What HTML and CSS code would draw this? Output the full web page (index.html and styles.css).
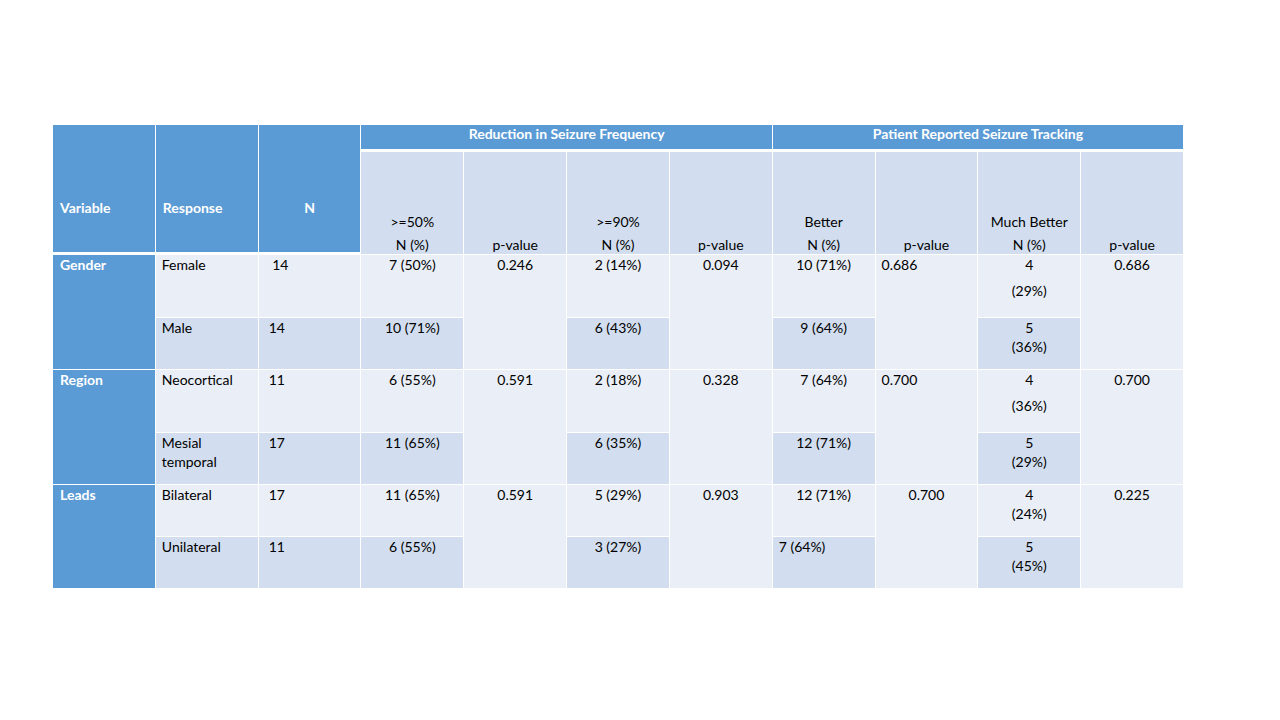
FILE: index.html
```html
<!DOCTYPE html>
<html lang="en">
<head>
<meta charset="utf-8">
<title>Seizure outcomes table</title>
<link rel="stylesheet" href="styles.css">
</head>
<body>
<div class="table">
  <div class="hd var span2r">Variable</div>
  <div class="hd var span2r">Response</div>
  <div class="hd var span2r center">N</div>
  <div class="hd group span4c">Reduction in Seizure Frequency</div>
  <div class="hd group span4c">Patient Reported Seizure Tracking</div>

  <div class="sub"><span class="l1">&gt;=50%</span><span>N (%)</span></div>
  <div class="sub"><span>p-value</span></div>
  <div class="sub"><span class="l1">&gt;=90%</span><span>N (%)</span></div>
  <div class="sub"><span>p-value</span></div>
  <div class="sub"><span class="l1">Better</span><span>N (%)</span></div>
  <div class="sub"><span>p-value</span></div>
  <div class="sub"><span class="l1">Much Better</span><span>N (%)</span></div>
  <div class="sub"><span>p-value</span></div>

  <!-- Gender -->
  <div class="rh span2r">Gender</div>
  <div class="d a left">Female</div>
  <div class="d a left n">&nbsp;14</div>
  <div class="d a">7 (50%)</div>
  <div class="d a span2r">0.246</div>
  <div class="d a">2 (14%)</div>
  <div class="d a span2r">0.094</div>
  <div class="d a">10 (71%)</div>
  <div class="d a span2r left">0.686</div>
  <div class="d a"><span class="ln">4</span><span class="ln wide">(29%)</span></div>
  <div class="d a span2r">0.686</div>

  <div class="d b left">Male</div>
  <div class="d b left n">14</div>
  <div class="d b">10 (71%)</div>
  <div class="d b">6 (43%)</div>
  <div class="d b">9 (64%)</div>
  <div class="d b"><span class="ln">5</span><span class="ln">(36%)</span></div>

  <!-- Region -->
  <div class="rh span2r">Region</div>
  <div class="d a left">Neocortical</div>
  <div class="d a left n">11</div>
  <div class="d a">6 (55%)</div>
  <div class="d a span2r">0.591</div>
  <div class="d a">2 (18%)</div>
  <div class="d a span2r">0.328</div>
  <div class="d a">7 (64%)</div>
  <div class="d a span2r left">0.700</div>
  <div class="d a"><span class="ln">4</span><span class="ln wide">(36%)</span></div>
  <div class="d a span2r">0.700</div>

  <div class="d b left"><span class="ln">Mesial</span><span class="ln">temporal</span></div>
  <div class="d b left n">17</div>
  <div class="d b">11 (65%)</div>
  <div class="d b">6 (35%)</div>
  <div class="d b">12 (71%)</div>
  <div class="d b"><span class="ln">5</span><span class="ln">(29%)</span></div>

  <!-- Leads -->
  <div class="rh span2r">Leads</div>
  <div class="d a left">Bilateral</div>
  <div class="d a left n">17</div>
  <div class="d a">11 (65%)</div>
  <div class="d a span2r">0.591</div>
  <div class="d a">5 (29%)</div>
  <div class="d a span2r">0.903</div>
  <div class="d a">12 (71%)</div>
  <div class="d a span2r">0.700</div>
  <div class="d a"><span class="ln">4</span><span class="ln">(24%)</span></div>
  <div class="d a span2r">0.225</div>

  <div class="d b left">Unilateral</div>
  <div class="d b left n">11</div>
  <div class="d b">6 (55%)</div>
  <div class="d b">3 (27%)</div>
  <div class="d b left">7 (64%)</div>
  <div class="d b"><span class="ln">5</span><span class="ln">(45%)</span></div>
</div>
</body>
</html>
```

FILE: styles.css
```css
html, body {
  margin: 0;
  padding: 0;
  background: #ffffff;
}

body {
  font-family: Lato, "Open Sans", "Liberation Sans", sans-serif;
  font-size: 14px;
  color: #000000;
}

.table {
  display: grid;
  grid-template-columns: repeat(11, 1fr);
  grid-template-rows: 26px 102px 62px 51px 62px 51px 51px 51px;
  gap: 1px;
  width: 1130px;
  margin: 125px 0 0 53px;
  background: #ffffff;
}

.span2r { grid-row: span 2; }
.span4c { grid-column: span 4; }

.hd {
  background: #5b9bd5;
  color: #ffffff;
  font-weight: 700;
  border-bottom: 2px solid #ffffff;
  box-sizing: border-box;
}

.hd.var {
  display: flex;
  align-items: flex-end;
  padding: 0 7px 36px;
  line-height: 16px;
}

.hd.var.center {
  justify-content: center;
}

.hd.group {
  text-align: center;
  line-height: 16px;
  padding-top: 1px;
}

.sub {
  background: #d2deef;
  display: flex;
  flex-direction: column;
  justify-content: flex-end;
  align-items: center;
  line-height: 18px;
}

.sub .l1 {
  margin-bottom: 5px;
}

.rh {
  background: #5b9bd5;
  color: #ffffff;
  font-weight: 700;
  padding: 0 7px;
  line-height: 19px;
}

.d {
  text-align: center;
  line-height: 19px;
  padding: 0 6px;
}

.d.a { background: #e9eef7; }
.d.b { background: #d2deef; }

.d.left { text-align: left; }
.d.n { padding-left: 10px; }

.ln { display: block; }
.ln.wide { margin-top: 7px; }
```
